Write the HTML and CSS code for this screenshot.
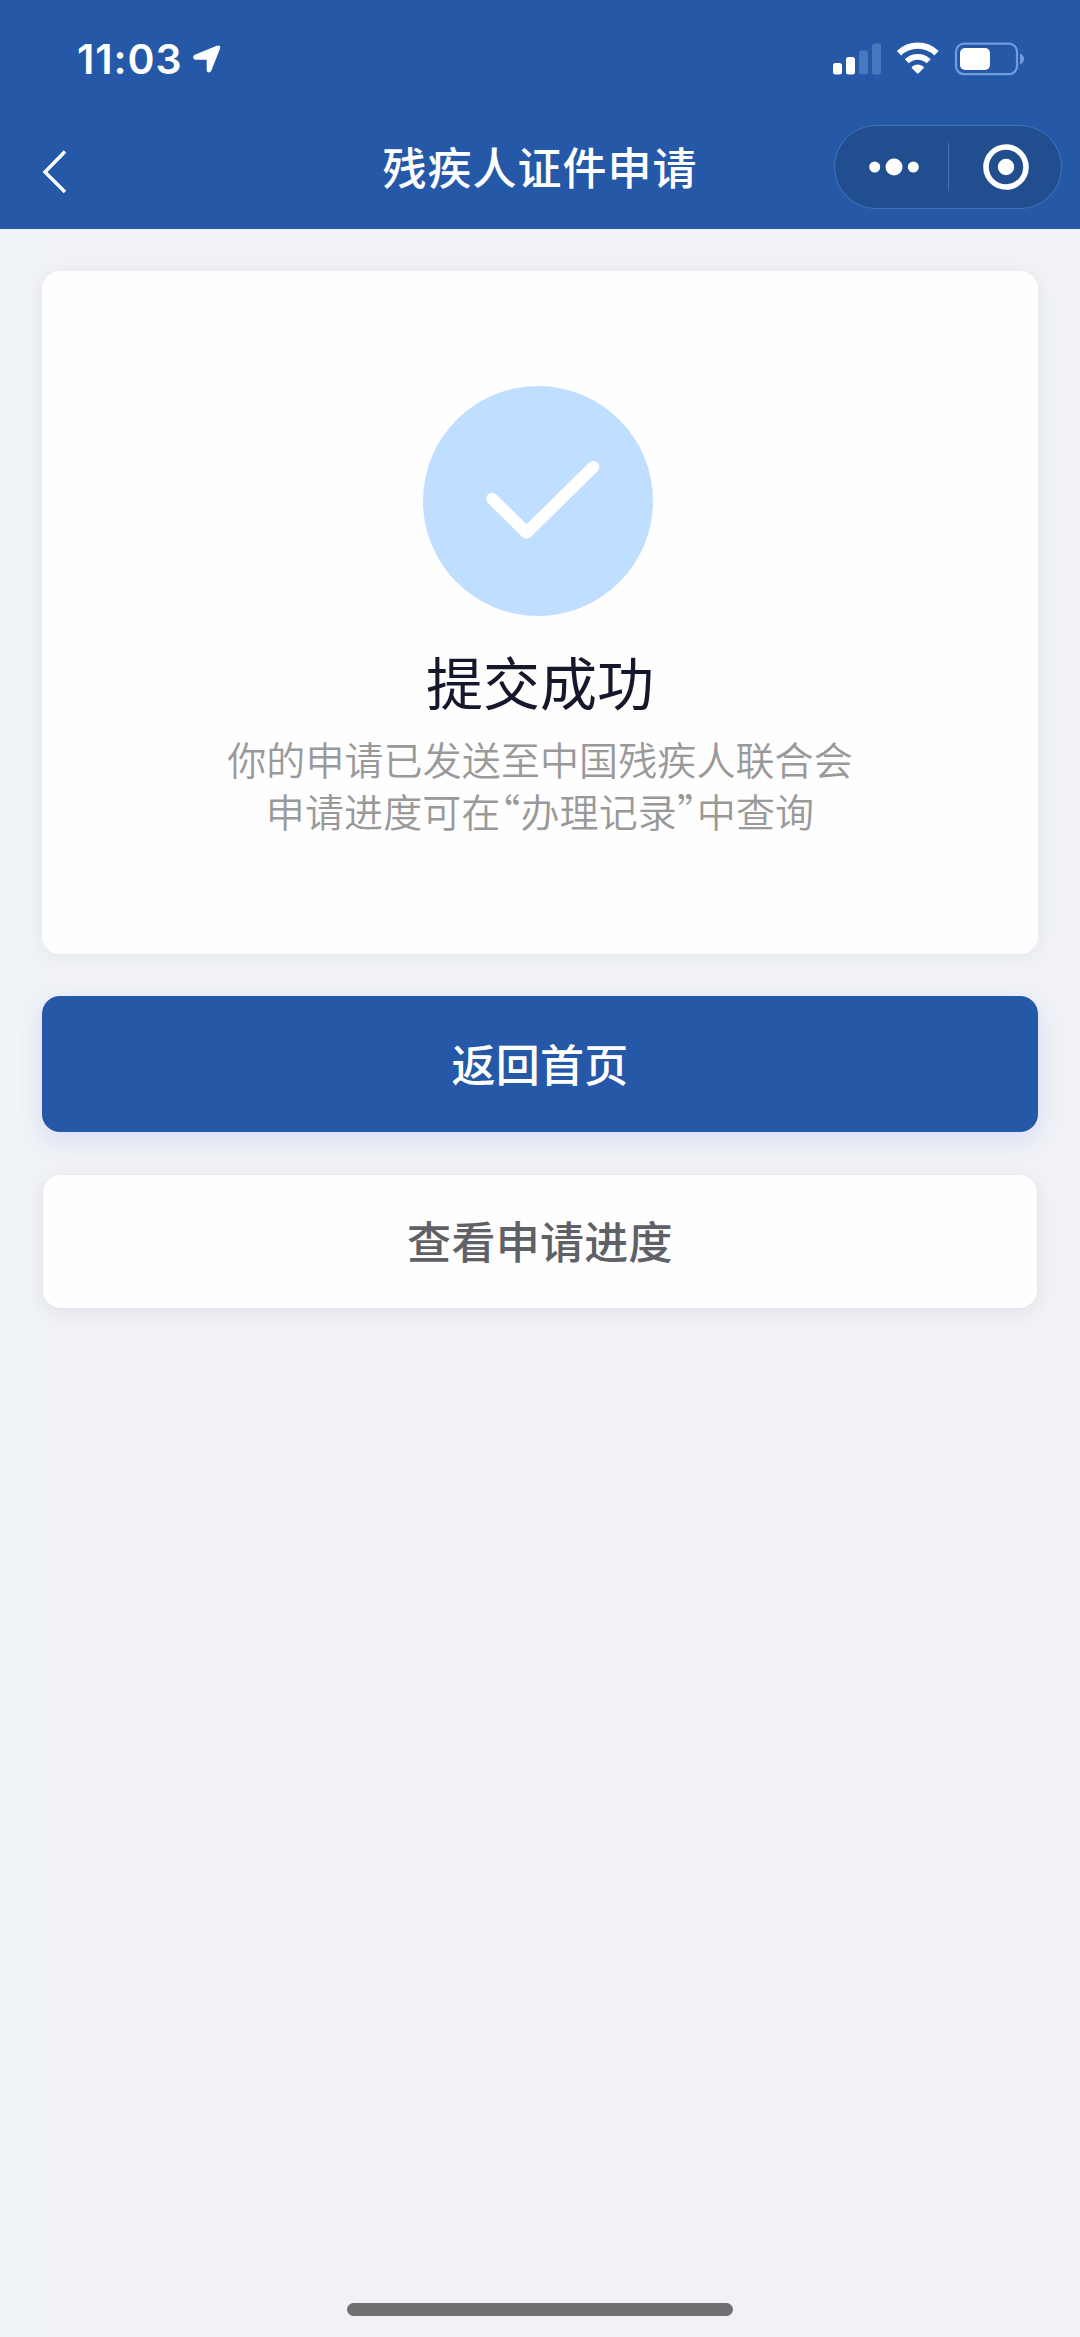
FILE: index.html
```html
<!DOCTYPE html>
<html lang="zh-CN">
<head>
<meta charset="utf-8">
<title>残疾人证件申请</title>
<link rel="stylesheet" href="styles.css">
</head>
<body>
<div class="screen">
  <header class="header">
    <div class="status">
      <div class="status-left">
        <span class="time">11:03</span>
        <svg class="location" width="28" height="28" viewBox="0 0 28 28"><path d="M1.800 9.800 23.800 .7Q27.800-.4 27.200 3.200L18.400 25.400Q17.400 27.500 15.600 27.400 13.700 27.200 13.700 25.200V14.800H2.400Q.3 14.500.1 12.500 0 10.600 1.800 9.800Z" fill="#fff"/></svg>
      </div>
      <svg class="status-icons" width="192" height="34" viewBox="0 0 192 34">
        <g fill="#fff">
          <rect x="0" y="21" width="9" height="11.500" rx="2.500"/>
          <rect x="13" y="15" width="9" height="17.500" rx="2.500"/>
        </g>
        <g fill="#457abe">
          <rect x="26" y="8.500" width="9" height="24" rx="2.500"/>
          <rect x="39" y="1.500" width="9" height="31" rx="2.500"/>
        </g>
        <g fill="none" stroke="#fff" stroke-width="6.200">
          <path d="M66 11.200A27 27 0 0 1 103.500 11.200"/>
          <path d="M73.800 19.300A15.600 15.600 0 0 1 95.700 19.300" stroke-width="5.800"/>
        </g>
        <path d="M79 24.800Q84.700 20.200 90.500 24.800 91.200 25.500 90.500 26.200L85.600 31.300Q84.800 32 84 31.300L79 26.200Q78.300 25.500 79 24.800Z" fill="#fff"/>
        <rect x="123" y="1.700" width="61" height="30.500" rx="8" fill="none" stroke="#739be0" stroke-width="2.200"/>
        <rect x="127" y="6" width="30" height="22" rx="5" fill="#fff"/>
        <path d="M187 11.500Q191 13.500 191 17T187 22.500Z" fill="#739be0"/>
      </svg>
    </div>
    <nav class="navbar">
      <svg class="back" width="28" height="46" viewBox="0 0 28 46"><path d="M24 2.500 4 23 24 43" fill="none" stroke="#fff" stroke-width="3.500"/></svg>
      <h1 class="title">残疾人证件申请</h1>
      <div class="capsule">
        <svg class="more" width="50" height="18" viewBox="0 0 50 18" fill="#fff"><circle cx="5.700" cy="9" r="5.500"/><circle cx="25" cy="9" r="8.500"/><circle cx="44.300" cy="9" r="5.500"/></svg>
        <span class="divider"></span>
        <svg class="target" width="46" height="46" viewBox="0 0 46 46"><circle cx="23" cy="23" r="20" fill="none" stroke="#fff" stroke-width="5.600"/><circle cx="23" cy="23" r="8.200" fill="#fff"/></svg>
      </div>
    </nav>
  </header>
  <main class="content">
    <section class="card">
      <svg class="success" width="230" height="230" viewBox="0 0 230 230"><circle cx="115" cy="115" r="115" fill="#c0deff"/><path d="M69.200 112.800 103.500 146.700 170.300 81" fill="none" stroke="#fff" stroke-width="12" stroke-linecap="round" stroke-linejoin="round"/></svg>
      <h2 class="result">提交成功</h2>
      <p class="desc">你的申请已发送至中国残疾人联合会<br>申请进度可在<span class="quote">“</span>办理记录<span class="quote">”</span>中查询</p>
    </section>
    <button class="btn primary">返回首页</button>
    <button class="btn secondary">查看申请进度</button>
  </main>
  <div class="home-bar"></div>
</div>
</body>
</html>
```
FILE: styles.css
```css
* { box-sizing: border-box; margin: 0; padding: 0; }
body { font-family: "Noto Sans CJK SC", sans-serif; }
svg { display: block; flex: none; }

.screen {
  width: 1080px;
  height: 2337px;
  display: flex;
  flex-direction: column;
  align-items: center;
  padding-bottom: 21px;
  background: linear-gradient(90deg, #eef4f5 0, #eff4f6 16px, #f0f2f6 40px);
}

.header { width: 100%; height: 229px; background: #2558a7; }
.status {
  height: 120px;
  display: flex;
  justify-content: space-between;
  align-items: flex-start;
  padding: 42px 55px 0 77px;
}
.status-left { display: flex; gap: 12px; }
.time {
  width: 104px;
  font: 600 41px/34px Inter, sans-serif;
  letter-spacing: .9px;
  color: #fff;
  white-space: nowrap;
}
.location { margin-top: 3px; }

.navbar {
  height: 94px;
  display: grid;
  grid-template-columns: 340px 400px 340px;
  align-items: center;
}
.back { margin: 10px 0 0 41px; }
.title {
  padding-bottom: 3px;
  text-align: center;
  font-size: 44px;
  font-weight: 500;
  letter-spacing: 1px;
  line-height: 60px;
  color: #fff;
}
.capsule {
  width: 228px;
  height: 84px;
  margin-left: 94px;
  display: flex;
  align-items: center;
  border: 1px solid #4474b8;
  border-radius: 42px;
  background: #204e8e;
}
.more { margin-left: 34px; }
.divider { width: 1px; height: 48px; margin-left: 29px; background: #4773b3; }
.target { margin-left: 34px; }

.content {
  flex: 1;
  width: 996px;
  padding-top: 42px;
  display: flex;
  flex-direction: column;
}
.card {
  height: 683px;
  padding-top: 115px;
  display: flex;
  flex-direction: column;
  align-items: center;
  border-radius: 18px;
  background: #fefefe;
  box-shadow: 0 3px 18px rgba(40, 50, 70, .055);
}
.success { margin-right: 5px; }
.result {
  margin-top: 24px;
  font-size: 57px;
  font-weight: 400;
  line-height: 80px;
  color: #15182a;
}
.desc {
  margin-top: 12px;
  text-align: center;
  font-size: 39px;
  font-weight: 350;
  letter-spacing: .1px;
  line-height: 52px;
  color: #999;
}
.quote {
  display: inline-block;
  width: 20px;
  font-feature-settings: "halt";
  line-height: 1;
}
.btn {
  border: 0;
  padding-bottom: 3px;
  font-family: inherit;
  font-size: 44px;
  font-weight: 500;
  letter-spacing: .3px;
  line-height: 60px;
  border-radius: 18px;
}
.primary {
  height: 136px;
  margin-top: 42px;
  color: #fff;
  background: #2558a7;
  box-shadow: 0 8px 24px rgba(75, 95, 240, .14);
}
.secondary {
  height: 133px;
  margin: 43px 1px 0;
  color: #606067;
  background: #fefefe;
  box-shadow: 0 4px 18px rgba(35, 35, 50, .08);
}
.home-bar { width: 386px; height: 13px; border-radius: 7px; background: #6f7072; }
```
